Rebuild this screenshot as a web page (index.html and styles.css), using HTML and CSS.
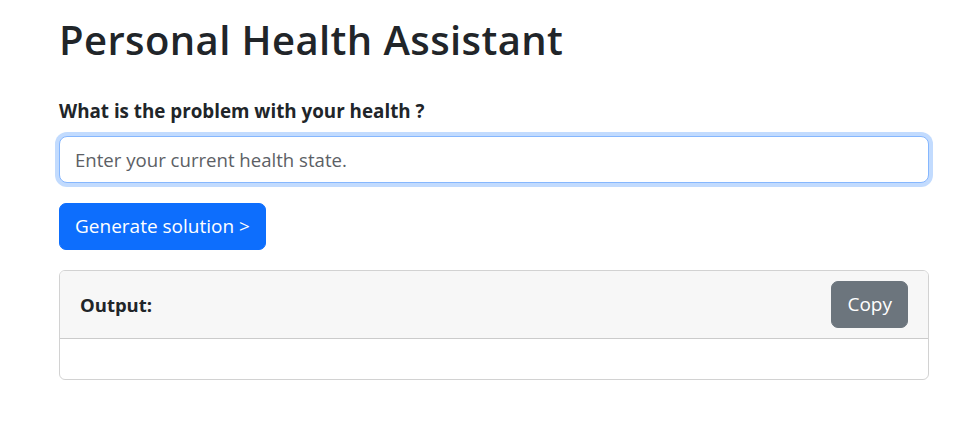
FILE: index.html
```html
<!DOCTYPE html>
<html lang="en">
<head>
<meta charset="utf-8">
<title>Personal Health Assistant</title>
<link rel="stylesheet" href="styles.css">
</head>
<body>
<main class="page">
  <h1 class="title">Personal Health Assistant</h1>
  <label class="field-label" for="health">What is the problem with your health ?</label>
  <input id="health" class="field-input" type="text" placeholder="Enter your current health state.">
  <button class="btn btn-primary" type="button">Generate solution &gt;</button>
  <section class="card">
    <div class="card-header">
      <span class="card-title">Output:</span>
      <button class="btn btn-secondary" type="button">Copy</button>
    </div>
    <div class="card-body"></div>
  </section>
</main>
</body>
</html>
```

FILE: styles.css
```css
* { box-sizing: border-box; }
html, body { margin: 0; padding: 0; background: #fff; }
body {
  font-family: "Open Sans", "Noto Sans", sans-serif;
  color: #212529;
}
.page {
  width: 870px;
  margin-left: 59px;
  padding-top: 16px;
  display: flex;
  flex-direction: column;
  align-items: flex-start;
}
.title {
  margin: 0;
  font-size: 40px;
  line-height: 48px;
  font-weight: 600;
  letter-spacing: 0.4px;
}
.field-label {
  margin-top: 32px;
  font-size: 18.8px;
  line-height: 30px;
  font-weight: 700;
}
.field-input {
  margin-top: 10px;
  width: 100%;
  height: 47px;
  padding: 0 15px;
  font-family: inherit;
  font-size: 18.6px;
  color: #212529;
  border: 1px solid #86b7fe;
  border-radius: 8px;
  box-shadow: 0 0 0 4px rgba(13, 110, 253, .25);
  outline: none;
  background: #fff;
}
.field-input::placeholder { color: #5c6065; }
.btn {
  font-family: inherit;
  font-size: 19px;
  line-height: 29px;
  padding: 8px 15px;
  border: 1px solid transparent;
  border-radius: 7px;
  color: #fff;
  cursor: pointer;
}
.btn-primary {
  margin-top: 20px;
  background: #0d6efd;
  border-color: #0d6efd;
}
.btn-secondary {
  background: #6c757d;
  border-color: #6c757d;
}
.card {
  margin-top: 20px;
  width: 100%;
  border: 1px solid rgba(0, 0, 0, .175);
  border-radius: 6px;
  overflow: hidden;
}
.card-header {
  display: flex;
  justify-content: space-between;
  align-items: center;
  padding: 10px 20px;
  background: #f7f7f7;
  border-bottom: 1px solid rgba(0, 0, 0, .175);
}
.card-title {
  font-size: 18.5px;
  font-weight: 700;
}
.card-body {
  height: 40px;
}
```
